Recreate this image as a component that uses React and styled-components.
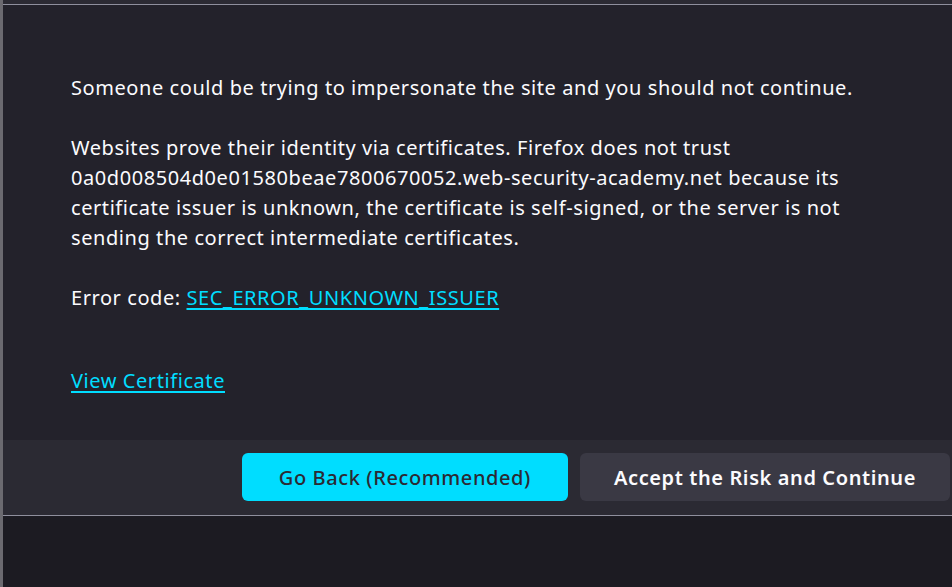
import React from 'react';
import styled, { createGlobalStyle } from 'styled-components';

const GlobalStyle = createGlobalStyle`
  html, body {
    margin: 0;
    padding: 0;
    background: #1c1b22;
  }
  body {
    font-family: 'Noto Sans', 'Open Sans', sans-serif;
    color: #fbfbfe;
  }
`;

const Page = styled.div`
  min-height: 100vh;
  border-left: 3px solid #6b6a70;
  box-sizing: border-box;
  background: #1c1b22;
`;

const TopStrip = styled.div`
  height: 4px;
  background: #2b2a33;
`;

const Panel = styled.div`
  background: #23222b;
  border-top: 1px solid #8f8f9d;
  border-bottom: 1px solid #8f8f9d;
`;

const Content = styled.div`
  padding: 68px 0 44px 68px;
  max-width: 800px;
`;

const Paragraph = styled.p`
  margin: 0 0 ${(p) => p.$gap ?? 30}px;
  font-size: 20px;
  line-height: 30px;
  letter-spacing: 0.57px;
`;

const Link = styled.a`
  color: #00ddff;
  text-decoration: underline;
  text-underline-offset: 3px;
  cursor: pointer;
`;

const Footer = styled.div`
  background: #2b2a33;
  display: flex;
  justify-content: flex-end;
  gap: 12px;
  padding: 13px 2px 14px 0;
`;

const Button = styled.button`
  height: 48px;
  padding: 0 ${(p) => (p.$primary ? 37 : 34)}px;
  border: none;
  border-radius: 6px;
  font-family: 'Noto Sans', 'Open Sans', sans-serif;
  font-size: 20px;
  letter-spacing: 0.6px;
  font-weight: ${(p) => (p.$primary ? 500 : 600)};
  background: ${(p) => (p.$primary ? '#00ddff' : '#3a3944')};
  color: ${(p) => (p.$primary ? '#2b2a33' : '#fbfbfe')};
  cursor: pointer;
`;

export default function App() {
  return (
    <>
      <GlobalStyle />
      <Page>
        <TopStrip />
        <Panel>
          <Content>
            <Paragraph>
              Someone could be trying to impersonate the site and you should not continue.
            </Paragraph>
            <Paragraph>
              Websites prove their identity via certificates. Firefox does not trust
              0a0d008504d0e01580beae7800670052.web-security-academy.net because its
              certificate issuer is unknown, the certificate is self-signed, or the server is not
              sending the correct intermediate certificates.
            </Paragraph>
            <Paragraph $gap={53}>
              Error code: <Link>SEC_ERROR_UNKNOWN_ISSUER</Link>
            </Paragraph>
            <Paragraph $gap={0}>
              <Link>View Certificate</Link>
            </Paragraph>
          </Content>
          <Footer>
            <Button $primary>Go Back (Recommended)</Button>
            <Button>Accept the Risk and Continue</Button>
          </Footer>
        </Panel>
      </Page>
    </>
  );
}
